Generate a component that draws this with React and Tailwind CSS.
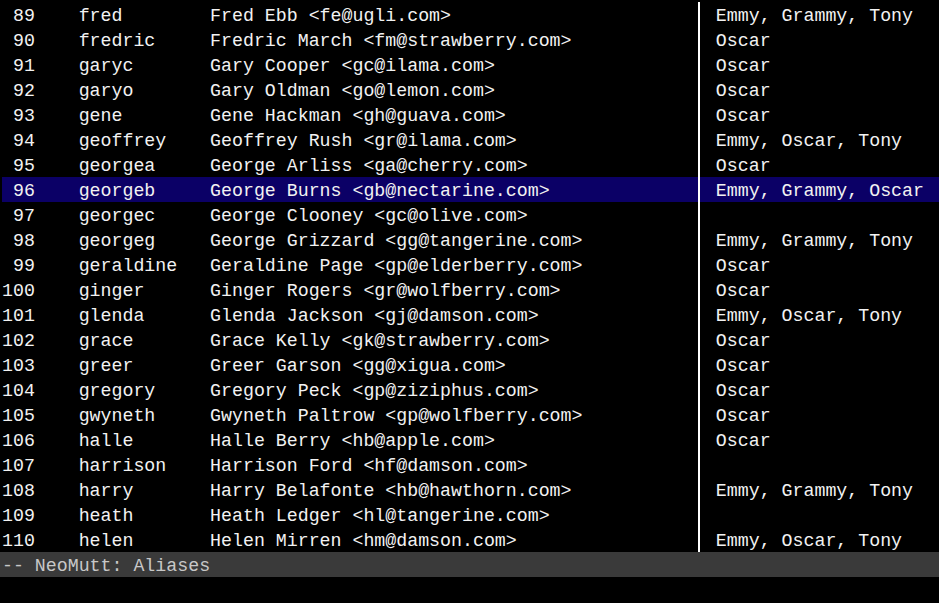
import React from 'react'

const ALIASES = [
  [89, 'fred', 'Fred Ebb <fe@ugli.com>', 'Emmy, Grammy, Tony'],
  [90, 'fredric', 'Fredric March <fm@strawberry.com>', 'Oscar'],
  [91, 'garyc', 'Gary Cooper <gc@ilama.com>', 'Oscar'],
  [92, 'garyo', 'Gary Oldman <go@lemon.com>', 'Oscar'],
  [93, 'gene', 'Gene Hackman <gh@guava.com>', 'Oscar'],
  [94, 'geoffrey', 'Geoffrey Rush <gr@ilama.com>', 'Emmy, Oscar, Tony'],
  [95, 'georgea', 'George Arliss <ga@cherry.com>', 'Oscar'],
  [96, 'georgeb', 'George Burns <gb@nectarine.com>', 'Emmy, Grammy, Oscar'],
  [97, 'georgec', 'George Clooney <gc@olive.com>', ''],
  [98, 'georgeg', 'George Grizzard <gg@tangerine.com>', 'Emmy, Grammy, Tony'],
  [99, 'geraldine', 'Geraldine Page <gp@elderberry.com>', 'Oscar'],
  [100, 'ginger', 'Ginger Rogers <gr@wolfberry.com>', 'Oscar'],
  [101, 'glenda', 'Glenda Jackson <gj@damson.com>', 'Emmy, Oscar, Tony'],
  [102, 'grace', 'Grace Kelly <gk@strawberry.com>', 'Oscar'],
  [103, 'greer', 'Greer Garson <gg@xigua.com>', 'Oscar'],
  [104, 'gregory', 'Gregory Peck <gp@ziziphus.com>', 'Oscar'],
  [105, 'gwyneth', 'Gwyneth Paltrow <gp@wolfberry.com>', 'Oscar'],
  [106, 'halle', 'Halle Berry <hb@apple.com>', 'Oscar'],
  [107, 'harrison', 'Harrison Ford <hf@damson.com>', ''],
  [108, 'harry', 'Harry Belafonte <hb@hawthorn.com>', 'Emmy, Grammy, Tony'],
  [109, 'heath', 'Heath Ledger <hl@tangerine.com>', ''],
  [110, 'helen', 'Helen Mirren <hm@damson.com>', 'Emmy, Oscar, Tony'],
]

const SELECTED = 96

export default function App() {
  return (
    <div className="w-[939px] h-[603px] bg-black overflow-hidden pt-[2px] text-[18.25px] text-[#f2f2f2] font-['Liberation_Mono',monospace]">
      {ALIASES.map(([n, alias, name, awards]) => {
        const left = `${String(n).padStart(3)}    ${alias.padEnd(12)}${name.padEnd(44)}`
        return (
          <div key={n} className={`flex h-[25px] ml-[2px] whitespace-pre ${n === SELECTED ? 'bg-[#0b0066]' : ''}`}>
            <span className="pt-[4px] leading-[21px]">{left}</span>
            <span className="w-[1ch] ml-[2px] flex justify-center">
              <span className="w-[2px] h-full bg-white" />
            </span>
            <span className="pt-[4px] leading-[21px]">{' ' + awards}</span>
          </div>
        )
      })}
      {/* status line */}
      <div className="h-[25px] bg-[#3a3a3a] text-[#c8c8c8] pl-[2px] pt-[4px] leading-[21px] whitespace-pre">-- NeoMutt: Aliases</div>
    </div>
  )
}
